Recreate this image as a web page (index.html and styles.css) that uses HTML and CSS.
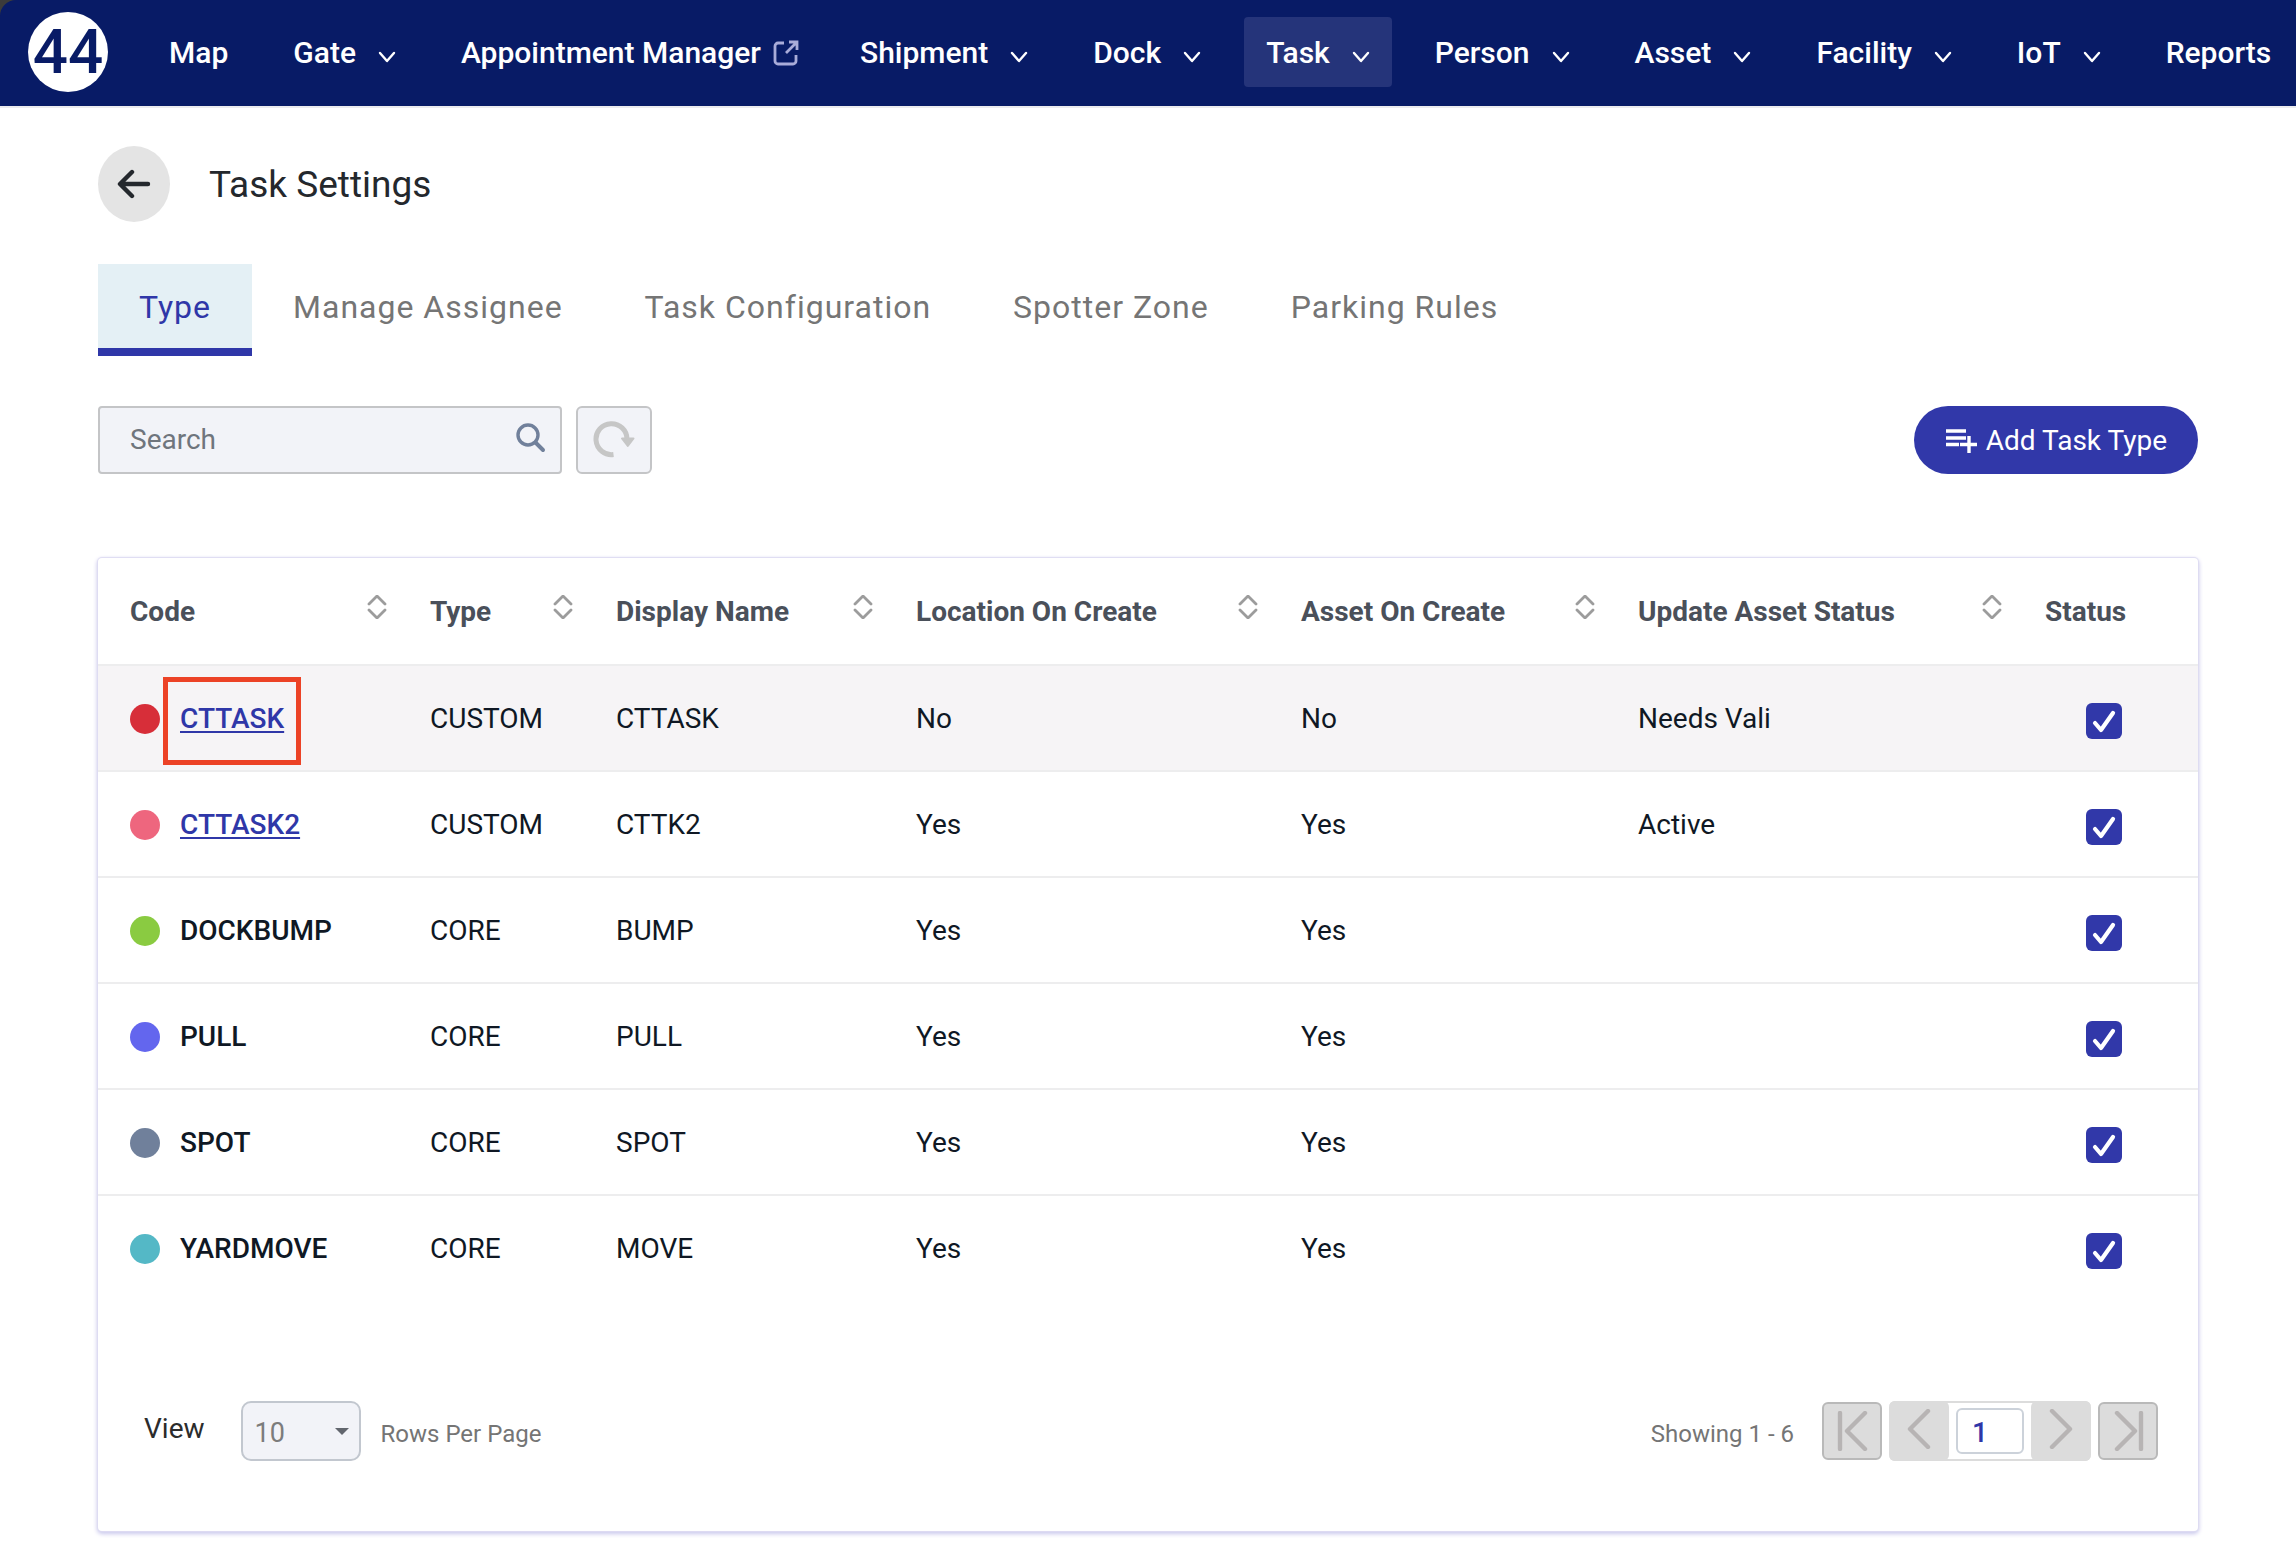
FILE: index.html
```html
<!DOCTYPE html>
<html lang="en">
<head>
<meta charset="utf-8">
<title>Task Settings</title>
<link rel="stylesheet" href="styles.css">
</head>
<body>
<svg class="sprite" aria-hidden="true">
  <symbol id="caret" viewBox="0 0 18 12"><path d="M2 2l7 8 7-8" fill="none" stroke="currentColor" stroke-width="2.4" stroke-linecap="round" stroke-linejoin="round"/></symbol>
  <symbol id="sort" viewBox="0 0 20 24"><path d="M2 9l8-8 8 8M2 15l8 8 8-8" fill="none" stroke="currentColor" stroke-width="2.8" stroke-linecap="round" stroke-linejoin="round"/></symbol>
</svg>

<div class="topbar">
<nav class="nav" aria-label="Main">
  <a class="logo" href="#">44</a>
  <ul class="menu">
    <li><a href="#">Map</a></li>
    <li><a href="#">Gate<svg class="caret"><use href="#caret"/></svg></a></li>
    <li><a class="external" href="#">Appointment Manager<svg class="ext" viewBox="0 0 26 26"><path d="M11 3H5a3 3 0 0 0-3 3v15a3 3 0 0 0 3 3h15a3 3 0 0 0 3-3v-6M16 2h8v8M24 2L13 13" fill="none" stroke="currentColor" stroke-width="2.8"/></svg></a></li>
    <li><a href="#">Shipment<svg class="caret"><use href="#caret"/></svg></a></li>
    <li><a href="#">Dock<svg class="caret"><use href="#caret"/></svg></a></li>
    <li><a class="current" href="#">Task<svg class="caret"><use href="#caret"/></svg></a></li>
    <li><a href="#">Person<svg class="caret"><use href="#caret"/></svg></a></li>
    <li><a href="#">Asset<svg class="caret"><use href="#caret"/></svg></a></li>
    <li><a href="#">Facility<svg class="caret"><use href="#caret"/></svg></a></li>
    <li><a href="#">IoT<svg class="caret"><use href="#caret"/></svg></a></li>
    <li><a href="#">Reports</a></li>
  </ul>
</nav>
</div>

<main class="page">
  <header class="heading">
    <button class="back" type="button" aria-label="Back"><svg width="34" height="30" viewBox="0 0 34 30"><path d="M15 3L3 15l12 12M4 15h27" fill="none" stroke="currentColor" stroke-width="4.4" stroke-linecap="round" stroke-linejoin="round"/></svg></button>
    <h1>Task Settings</h1>
  </header>

  <nav class="tabs" aria-label="Task settings">
    <a class="tab active" href="#">Type</a>
    <a class="tab" href="#">Manage Assignee</a>
    <a class="tab" href="#">Task Configuration</a>
    <a class="tab" href="#">Spotter Zone</a>
    <a class="tab" href="#">Parking Rules</a>
  </nav>

  <div class="toolbar">
    <div class="search">
      <input type="text" placeholder="Search" aria-label="Search">
      <svg width="30" height="30" viewBox="0 0 30 30"><circle cx="12" cy="12" r="10" fill="none" stroke="currentColor" stroke-width="3.4"/><path d="M19.500 19.500L27 27" stroke="currentColor" stroke-width="4" stroke-linecap="round"/></svg>
    </div>
    <button class="refresh" type="button" aria-label="Refresh"><svg width="42" height="38" viewBox="0 0 42 38"><path d="M20.500 33.500A15.500 15.500 0 1 1 34 18" fill="none" stroke="currentColor" stroke-width="5"/><path d="M29 17.500h11.500L34.800 25z" fill="currentColor" stroke="currentColor" stroke-width="2" stroke-linejoin="round"/></svg></button>
    <button class="add" type="button"><svg width="32" height="24" viewBox="0 0 32 24"><path d="M0 2h20M0 9h20M0 15.500h13M14 15.500h17M23 7v17" fill="none" stroke="currentColor" stroke-width="3.400"/></svg>Add Task Type</button>
  </div>

  <section class="card">
    <table>
      <colgroup><col class="c-code"><col class="c-type"><col class="c-name"><col class="c-loc"><col class="c-asset"><col class="c-upd"><col class="c-status"></colgroup>
      <thead>
        <tr>
          <th scope="col"><div class="th">Code<svg class="sort"><use href="#sort"/></svg></div></th>
          <th scope="col"><div class="th">Type<svg class="sort"><use href="#sort"/></svg></div></th>
          <th scope="col"><div class="th">Display Name<svg class="sort"><use href="#sort"/></svg></div></th>
          <th scope="col"><div class="th">Location On Create<svg class="sort"><use href="#sort"/></svg></div></th>
          <th scope="col"><div class="th">Asset On Create<svg class="sort"><use href="#sort"/></svg></div></th>
          <th scope="col"><div class="th">Update Asset Status<svg class="sort"><use href="#sort"/></svg></div></th>
          <th scope="col"><div class="th">Status</div></th>
        </tr>
      </thead>
      <tbody>
        <tr class="hover">
          <td><div class="code"><i class="dot red"></i><a class="marked" href="#">CTTASK</a></div></td>
          <td>CUSTOM</td><td>CTTASK</td><td>No</td><td>No</td><td>Needs Vali</td>
          <td class="status"><input type="checkbox" aria-label="CTTASK status" checked></td>
        </tr>
        <tr>
          <td><div class="code"><i class="dot pink"></i><a href="#">CTTASK2</a></div></td>
          <td>CUSTOM</td><td>CTTK2</td><td>Yes</td><td>Yes</td><td>Active</td>
          <td class="status"><input type="checkbox" aria-label="CTTASK2 status" checked></td>
        </tr>
        <tr>
          <td><div class="code"><i class="dot green"></i>DOCKBUMP</div></td>
          <td>CORE</td><td>BUMP</td><td>Yes</td><td>Yes</td><td></td>
          <td class="status"><input type="checkbox" aria-label="DOCKBUMP status" checked></td>
        </tr>
        <tr>
          <td><div class="code"><i class="dot indigo"></i>PULL</div></td>
          <td>CORE</td><td>PULL</td><td>Yes</td><td>Yes</td><td></td>
          <td class="status"><input type="checkbox" aria-label="PULL status" checked></td>
        </tr>
        <tr>
          <td><div class="code"><i class="dot slate"></i>SPOT</div></td>
          <td>CORE</td><td>SPOT</td><td>Yes</td><td>Yes</td><td></td>
          <td class="status"><input type="checkbox" aria-label="SPOT status" checked></td>
        </tr>
        <tr>
          <td><div class="code"><i class="dot teal"></i>YARDMOVE</div></td>
          <td>CORE</td><td>MOVE</td><td>Yes</td><td>Yes</td><td></td>
          <td class="status"><input type="checkbox" aria-label="YARDMOVE status" checked></td>
        </tr>
      </tbody>
    </table>

    <footer class="footer">
      <label class="view" for="rows">View</label>
      <div class="select">
        <select id="rows"><option>10</option><option>25</option><option>50</option></select>
        <svg width="14" height="7" viewBox="0 0 14 7"><path d="M0 0h14L7 7z" fill="currentColor"/></svg>
      </div>
      <span class="note">Rows Per Page</span>
      <span class="note showing">Showing 1 - 6</span>
      <button class="end" type="button" aria-label="First page"><svg width="32" height="40" viewBox="0 0 32 40"><path d="M4 2v36M29 2L11 20l18 18" fill="none" stroke="currentColor" stroke-width="4.400" stroke-linecap="round" stroke-linejoin="round"/></svg></button>
      <div class="pager">
        <button type="button" aria-label="Previous page"><svg width="24" height="40" viewBox="0 0 24 40"><path d="M21 2L3 20l18 18" fill="none" stroke="currentColor" stroke-width="4.400" stroke-linecap="round" stroke-linejoin="round"/></svg></button>
        <input type="text" value="1" aria-label="Page">
        <button type="button" aria-label="Next page"><svg width="24" height="40" viewBox="0 0 24 40"><path d="M3 2l18 18L3 38" fill="none" stroke="currentColor" stroke-width="4.400" stroke-linecap="round" stroke-linejoin="round"/></svg></button>
      </div>
      <button class="end last" type="button" aria-label="Last page"><svg width="32" height="40" viewBox="0 0 32 40"><path d="M29 2v36M5 2l18 18L5 38" fill="none" stroke="currentColor" stroke-width="4.400" stroke-linecap="round" stroke-linejoin="round"/></svg></button>
    </footer>
  </section>
</main>
</body>
</html>
```
FILE: styles.css
```css
* { box-sizing: border-box; }

body {
  margin: 0;
  background: #fff;
  color: #0f1824;
  font: 28px/36px Roboto, "Liberation Sans", sans-serif;
}

button, input, select { font: inherit; color: inherit; margin: 0; }
button { padding: 0; cursor: pointer; }
svg { flex: none; display: block; }
.sprite { position: absolute; width: 0; height: 0; }

/* Top navigation */
.topbar { background: #3b3b3b; border-bottom: 2px solid #ebebee; }
.nav {
  display: flex;
  align-items: center;
  height: 106px;
  padding: 0 0 2px 28px;
  background: #081b66;
  border-top-left-radius: 16px;
}
.logo {
  width: 80px;
  height: 80px;
  flex: none;
  border-radius: 50%;
  background: #fff;
  color: #081b66;
  font: 500 62px/80px Roboto, "Liberation Sans", sans-serif;
  text-align: center;
  text-decoration: none;
}
.menu {
  display: flex;
  gap: 21px;
  margin: 0 0 0 39px;
  padding: 0;
  list-style: none;
}
.menu a {
  display: flex;
  align-items: center;
  gap: 22px;
  height: 70px;
  padding: 2px 22px 0;
  border-radius: 4px;
  color: #fff;
  font-size: 30px;
  font-weight: 500;
  text-decoration: none;
  white-space: nowrap;
}
.menu .current { background: #25347a; }
.menu .external { gap: 12px; padding-right: 18px; }
.caret { width: 18px; height: 12px; margin-top: 8px; }
.ext { width: 26px; height: 26px; color: #a9acd9; }

/* Page heading and tabs */
.page { padding: 38px 98px 12px; }
.heading { display: flex; align-items: center; gap: 39px; }
.back {
  display: grid;
  place-items: center;
  width: 72px;
  height: 76px;
  border: 0;
  border-radius: 50%;
  background: #e4e4e4;
  color: #24282d;
}
h1 { margin: 0; padding-top: 2px; font-size: 37px; line-height: 48px; font-weight: 400; color: #24282d; }

.tabs { display: flex; margin-top: 42px; }
.tab {
  padding: 25px 41px 23px;
  border-bottom: 8px solid transparent;
  color: #757575;
  font-size: 32px;
  letter-spacing: 1px;
  line-height: 36px;
  text-decoration: none;
}
.tab.active { background: #e4f0f5; border-color: #2f37a8; color: #2f37a8; }

/* Search and actions */
.toolbar { display: flex; align-items: center; margin-top: 50px; }
.search {
  display: flex;
  align-items: center;
  width: 464px;
  height: 68px;
  padding: 0 14px 0 30px;
  border: 2px solid #c4c5c7;
  border-radius: 4px;
  background: #f2f3f8;
  color: #71809b;
}
.search input { flex: 1; min-width: 0; padding: 0; border: 0; outline: 0; background: none; color: #6f757d; }
.search input::placeholder { color: #6f757d; opacity: 1; }
.search svg { margin-bottom: 4px; }
.refresh {
  display: grid;
  place-items: center;
  width: 76px;
  height: 68px;
  margin-left: 14px;
  border: 2px solid #c4c5c7;
  border-radius: 6px;
  background: #f2f3f8;
  color: #c6c6c6;
}
.add {
  display: flex;
  align-items: center;
  gap: 8px;
  height: 68px;
  margin-left: auto;
  padding: 2px 31px 0 32px;
  border: 0;
  border-radius: 34px;
  background: #3138a9;
  color: #fff;
}

/* Task type table */
.card {
  margin-top: 84px;
  padding-bottom: 70px;
  border-radius: 4px;
  background: #fff;
  box-shadow: 0 0 1px 1px #dedcf2, 0 2px 4px 1px #c9c7ec;
}
table { width: 100%; table-layout: fixed; border-collapse: separate; border-spacing: 0; }
.c-code, .c-name { width: 300px; }
.c-type { width: 186px; }
.c-loc { width: 385px; }
.c-asset { width: 337px; }
.c-upd { width: 407px; }
.c-status { width: 185px; }
th, td { height: 106px; padding: 2px 0 0 32px; border-bottom: 2px solid #ededee; text-align: left; }
th { height: 108px; color: #4a505a; font-weight: 700; }
.th { display: flex; align-items: center; justify-content: space-between; padding-right: 11px; white-space: nowrap; }
.sort { width: 20px; height: 24px; margin-bottom: 10px; color: #9c9c9c; }
tbody tr:last-child td { border-bottom-color: transparent; }
.hover td { background: #f6f4f6; }
.code { display: flex; align-items: center; gap: 20px; font-weight: 500; }
.code a { color: #2f37a8; text-decoration-thickness: 2px; text-underline-offset: 3px; }
.dot { width: 30px; height: 30px; border-radius: 50%; }
.red { background: #d72e39; }
.pink { background: #ee667e; }
.green { background: #8acb41; }
.indigo { background: #6366ee; }
.slate { background: #70809b; }
.teal { background: #54b8c6; }
.marked { position: relative; }
.marked::after {
  content: "";
  position: absolute;
  inset: -24px -17px -28px;
  border: 5px solid #ec4226;
}
.status { padding: 6px 4px 0 0; text-align: center; }
.status input {
  appearance: none;
  display: block;
  width: 36px;
  height: 36px;
  margin: 0 auto;
  border-radius: 6px;
  background: #3138a9 url("data:image/svg+xml,%3Csvg xmlns='http://www.w3.org/2000/svg' viewBox='0 0 36 36'%3E%3Cpath d='M9 20l6 7L27 10' fill='none' stroke='white' stroke-width='4.200' stroke-linecap='round' stroke-linejoin='round'/%3E%3C/svg%3E");
}

/* Pagination */
.footer { display: flex; align-items: center; margin-top: 99px; padding: 0 40px 0 46px; }
.view { padding-bottom: 4px; color: #2c2c2c; }
.select { display: grid; align-items: center; width: 120px; margin: 0 20px 0 36px; color: #62666e; }
.select > * { grid-area: 1 / 1; }
.select select {
  appearance: none;
  height: 60px;
  padding: 4px 12px 0;
  border: 2px solid #c2c7cf;
  border-radius: 10px;
  background: #f2f3f8;
  color: #7c7c7c;
  font-size: 27px;
}
.select svg { justify-self: end; margin-right: 12px; pointer-events: none; }
.note { padding-top: 5px; color: #757575; font-size: 24px; }
.showing { margin-left: auto; margin-right: 28px; }
.end, .pager button {
  display: grid;
  place-items: center;
  width: 60px;
  height: 58px;
  border: 2px solid #b9b9b9;
  border-radius: 6px;
  background: #dcdcdc;
  color: #b7b4b4;
}
.pager {
  display: flex;
  align-items: center;
  gap: 7px;
  height: 60px;
  margin: 0 7px;
  border: solid #dcdcdc;
  border-width: 2px 0;
  border-radius: 6px;
}
.pager button { height: 60px; padding-bottom: 4px; border: 0; }
.pager input {
  width: 68px;
  height: 46px;
  padding: 2px 14px 0;
  border: 2px solid #ccd2da;
  border-radius: 6px;
  background: #fff;
  color: #2f37a8;
  font-weight: 500;
}
```
